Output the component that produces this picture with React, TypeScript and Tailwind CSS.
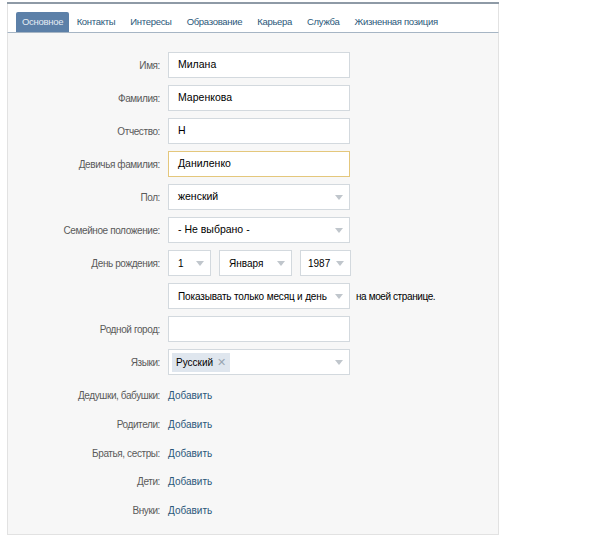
import React from "react";

const tabs = ["Основное", "Контакты", "Интересы", "Образование", "Карьера", "Служба", "Жизненная позиция"];

const Arrow = () => (
  <svg width="8" height="5" viewBox="0 0 8 5" className="shrink-0">
    <path d="M0 0h8L4 5z" fill="#c0c6cc" />
  </svg>
);

const Row = ({ label, children }: { label: string; children?: React.ReactNode }) => (
  <div className="flex items-center">
    <div className="w-[160px] pr-2 text-right text-[10px] tracking-[-0.4px] text-[#5a5a5a]">{label}</div>
    {children}
  </div>
);

const Input = ({ value = "", focus = false }: { value?: string; focus?: boolean }) => (
  <div
    className={
      focus
        ? "flex h-[26px] w-[182px] items-center border border-[#e4c77c] bg-white px-[9px] text-black"
        : "flex h-[26px] w-[182px] items-center border border-[#d3d9de] bg-white px-[9px] text-black"
    }
  >
    {value}
  </div>
);

const Select = ({ value, width }: { value: string; width: string }) => (
  <div className={`flex h-[26px] ${width} items-center justify-between border border-[#d3d9de] bg-white pl-[9px] pr-[6px] text-black`}>
    <span>{value}</span>
    <Arrow />
  </div>
);

const relatives = ["Дедушки, бабушки:", "Родители:", "Братья, сестры:", "Дети:", "Внуки:"];

export default function App() {
  return (
    <div className="h-[543px] w-[599px] bg-white pt-[2px] text-[10.5px]" style={{ fontFamily: '"Liberation Sans", Arial, sans-serif' }}>
      <div className="ml-[7px] w-[492px] border-t-2 border-[#8e9aa6]">
        {/* tab bar */}
        <div className="flex h-[29px] items-end border-x border-b border-x-[#e2e2e2] border-b-[#a6b5c4] bg-white pl-[8px] text-[9.5px] tracking-[-0.3px]">
          {tabs.map((t, i) =>
            i === 0 ? (
              <div key={t} className="flex h-[20px] items-center rounded-t-[2px] bg-[#5c80a8] px-[6px] text-[#e4ecf4]">
                {t}
              </div>
            ) : (
              <div key={t} className="flex h-[20px] items-center px-[7.5px] text-[#2b587a]">
                {t}
              </div>
            )
          )}
        </div>
        <div className="flex h-[502px] flex-col border-x border-b border-[#e2e2e2] bg-[#f7f7f7] pt-[19px]">
          <div className="flex flex-col gap-[7px]">
            <Row label="Имя:">
              <Input value="Милана" />
            </Row>
            <Row label="Фамилия:">
              <Input value="Маренкова" />
            </Row>
            <Row label="Отчество:">
              <Input value="Н" />
            </Row>
            <Row label="Девичья фамилия:">
              <Input value="Даниленко" focus />
            </Row>
            <Row label="Пол:">
              <Select value="женский" width="w-[182px]" />
            </Row>
            <Row label="Семейное положение:">
              <Select value="- Не выбрано -" width="w-[182px]" />
            </Row>
            <Row label="День рождения:">
              <div className="flex gap-[8px] text-[10px]">
                <Select value="1" width="w-[43px]" />
                <Select value="Января" width="w-[73px]" />
                <div className="flex h-[26px] w-[51px] items-center justify-between border border-[#d3d9de] bg-white pl-[7px] pr-[6px] text-black">
                  <span>1987</span>
                  <Arrow />
                </div>
              </div>
            </Row>
            <Row label="">
              <div className="flex h-[26px] w-[182px] items-center justify-between border border-[#d3d9de] bg-white pl-[9px] pr-[6px] text-[10px] tracking-[-0.15px] text-black">
                <span className="whitespace-nowrap">Показывать только месяц и день</span>
                <Arrow />
              </div>
              <span className="ml-[6px] whitespace-nowrap text-[10px] tracking-[-0.4px] text-black">на моей странице.</span>
            </Row>
            <Row label="Родной город:">
              <Input />
            </Row>
            <Row label="Языки:">
              <div className="flex h-[26px] w-[182px] items-center justify-between border border-[#d3d9de] bg-white pl-[3px] pr-[6px]">
                <span className="flex h-[19px] items-center gap-[4px] bg-[#dfe6ee] px-[4px] text-[10px] text-black">
                  Русский <span className="text-[11px] leading-none text-[#9aa6b2]">✕</span>
                </span>
                <Arrow />
              </div>
            </Row>
          </div>
          <div className="mt-[14px] flex flex-col gap-[15.75px]">
            {relatives.map((r) => (
              <div key={r} className="flex h-[13px] items-center">
                <div className="w-[160px] pr-2 text-right text-[10px] tracking-[-0.4px] text-[#5a5a5a]">{r}</div>
                <span className="text-[10px] text-[#2b587a]">Добавить</span>
              </div>
            ))}
          </div>
        </div>
      </div>
    </div>
  );
}
